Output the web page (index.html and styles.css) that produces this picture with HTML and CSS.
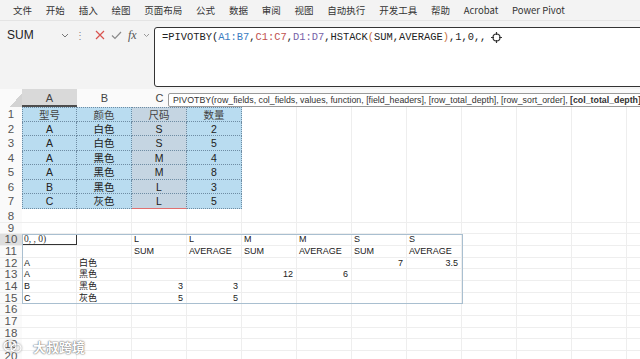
FILE: index.html
```html
<!DOCTYPE html>
<html lang="zh-CN">
<head>
  <meta charset="UTF-8">
  <title>PIVOTBY</title>
  <link rel="stylesheet" href="styles.css">
</head>
<body>
  <div class="menubar">
    <span>文件</span><span>开始</span><span>插入</span><span>绘图</span><span>页面布局</span><span>公式</span><span>数据</span><span>审阅</span><span>视图</span><span>自动执行</span><span>开发工具</span><span>帮助</span><span>Acrobat</span><span>Power Pivot</span>
  </div>

  <div class="formula-row">
    <div class="namebox">
      <span>SUM</span>
      <svg width="8" height="5" viewBox="0 0 8 5"><path d="M1 1l3 3 3-3" fill="none" stroke="#777" stroke-width="1"/></svg>
    </div>
    <div class="tools">
      <span class="dots">⋮</span>
      <svg width="10" height="10" viewBox="0 0 10 10"><path d="M1 1l8 8M9 1l-8 8" stroke="#d9534f" stroke-width="1.2"/></svg>
      <svg width="11" height="9" viewBox="0 0 11 9"><path d="M1 4.5l3 3 6-6.5" fill="none" stroke="#8a8a8a" stroke-width="1.2"/></svg>
      <span class="fx">fx</span>
      <svg width="7" height="5" viewBox="0 0 7 5"><path d="M1 1l2.5 2.5L6 1" fill="none" stroke="#999" stroke-width="1"/></svg>
    </div>
    <div class="formula-box">
      <span class="formula">=PIVOTBY(<span class="ref-a">A1:B7</span>,<span class="ref-c">C1:C7</span>,<span class="ref-d">D1:D7</span>,HSTACK<span class="paren">(</span>SUM,AVERAGE<span class="paren">)</span>,1,0,,</span>
      <svg class="cursor" width="11" height="11" viewBox="0 0 11 11"><circle cx="5.5" cy="5.5" r="3.5" fill="#fff" stroke="#333" stroke-width="1.2"/><path d="M5.5 0v3M5.5 8v3M0 5.5h3M8 5.5h3" stroke="#333" stroke-width="1.2"/></svg>
    </div>
  </div>

  <div class="sheet">
    <div class="tip">PIVOTBY(row_fields, col_fields, values, function, [field_headers], [row_total_depth], [row_sort_order], <b>[col_total_depth]</b></div>

    <div class="row head">
      <div class="rh corner"></div>
      <div class="c active">A</div><div class="c">B</div><div class="c">C</div>
    </div>

    <div class="row tall">
      <div class="rh">1</div>
      <div class="c t top first">型号</div><div class="c t top">颜色</div><div class="c t top mid">尺码</div><div class="c t top">数量</div>
    </div>
    <div class="row tall">
      <div class="rh">2</div>
      <div class="c t first">A</div><div class="c t">白色</div><div class="c t mid">S</div><div class="c t">2</div>
    </div>
    <div class="row tall">
      <div class="rh">3</div>
      <div class="c t first">A</div><div class="c t">白色</div><div class="c t mid">S</div><div class="c t">5</div>
    </div>
    <div class="row tall">
      <div class="rh">4</div>
      <div class="c t first">A</div><div class="c t">黑色</div><div class="c t mid">M</div><div class="c t">4</div>
    </div>
    <div class="row tall">
      <div class="rh">5</div>
      <div class="c t first">A</div><div class="c t">黑色</div><div class="c t mid">M</div><div class="c t">8</div>
    </div>
    <div class="row tall">
      <div class="rh">6</div>
      <div class="c t first">B</div><div class="c t">黑色</div><div class="c t mid">L</div><div class="c t">3</div>
    </div>
    <div class="row tall">
      <div class="rh">7</div>
      <div class="c t first">C</div><div class="c t">灰色</div><div class="c t mid last">L</div><div class="c t">5</div>
    </div>
    <div class="row r8"><div class="rh">8</div></div>
    <div class="row"><div class="rh">9</div></div>

    <div class="spill">
      <div class="row">
        <div class="rh on">10</div>
        <div class="c sel">0, , 0)</div><div class="c"></div><div class="c">L</div><div class="c">L</div><div class="c">M</div><div class="c">M</div><div class="c">S</div><div class="c">S</div>
      </div>
      <div class="row">
        <div class="rh">11</div>
        <div class="c"></div><div class="c"></div><div class="c">SUM</div><div class="c">AVERAGE</div><div class="c">SUM</div><div class="c">AVERAGE</div><div class="c">SUM</div><div class="c">AVERAGE</div>
      </div>
      <div class="row">
        <div class="rh">12</div>
        <div class="c">A</div><div class="c">白色</div><div class="c"></div><div class="c"></div><div class="c"></div><div class="c"></div><div class="c num">7</div><div class="c num">3.5</div>
      </div>
      <div class="row">
        <div class="rh">13</div>
        <div class="c">A</div><div class="c">黑色</div><div class="c"></div><div class="c"></div><div class="c num">12</div><div class="c num">6</div>
      </div>
      <div class="row">
        <div class="rh">14</div>
        <div class="c">B</div><div class="c">黑色</div><div class="c num">3</div><div class="c num">3</div>
      </div>
      <div class="row">
        <div class="rh">15</div>
        <div class="c">C</div><div class="c">灰色</div><div class="c num">5</div><div class="c num">5</div>
      </div>
    </div>

    <div class="row"><div class="rh">16</div></div>
    <div class="row"><div class="rh">17</div></div>
    <div class="row"><div class="rh">18</div></div>
    <div class="row"><div class="rh">19</div></div>
    <div class="row"><div class="rh">20</div></div>
  </div>

  <div class="watermark">
    <svg width="20" height="14" viewBox="0 0 20 14"><ellipse cx="7" cy="6" rx="6" ry="5" fill="none" stroke="#fff" stroke-width="1.2"/><ellipse cx="13" cy="8" rx="5" ry="4" fill="none" stroke="#fff" stroke-width="1.2"/></svg>
    <span>大叔跨境</span>
  </div>
</body>
</html>
```

FILE: styles.css
```css
body {
  margin: 0;
  width: 640px;
  height: 359px;
  overflow: hidden;
  background: #f3f3f3;
  font-family: "Liberation Sans", "Noto Sans CJK SC", sans-serif;
  color: #222;
  position: relative;
}

.menubar {
  display: flex;
  align-items: center;
  gap: 13.8px;
  height: 20px;
  padding-left: 13px;
  font-size: 9.5px;
  color: #333;
  font-family: "Noto Sans CJK SC", "Liberation Sans", sans-serif;
  border-bottom: 1px solid #e4e4e4;
}

.formula-row {
  display: flex;
  align-items: flex-start;
  height: 67px;
  padding-top: 6px;
  box-sizing: border-box;
}

.namebox {
  flex: none;
  display: flex;
  align-items: center;
  justify-content: space-between;
  width: 73px;
  height: 16px;
  padding: 0 4px 0 7px;
  box-sizing: border-box;
  font-size: 12px;
  color: #222;
}

.tools {
  flex: none;
  display: flex;
  align-items: center;
  gap: 6px;
  width: 81px;
  height: 16px;
  padding-left: 2px;
  box-sizing: border-box;
}

.tools .dots {
  font-size: 10px;
  color: #888;
  margin-right: 4px;
}

.tools .fx {
  font-family: "Liberation Serif", serif;
  font-style: italic;
  font-size: 12px;
  color: #555;
}

.formula-box {
  flex: none;
  display: flex;
  align-items: flex-start;
  width: 500px;
  height: 60px;
  padding: 3px 7px;
  box-sizing: border-box;
  background: #fff;
  border: 1.5px solid #333;
  border-radius: 3px;
  font-family: "Liberation Mono", monospace;
  font-size: 10.4px;
  color: #222;
}

.formula-box .cursor {
  margin: 1px 0 0 5px;
}

.ref-a { color: #3a7bbf; }
.ref-c { color: #c0504d; }
.ref-d { color: #7561a8; }
.paren { color: #c8703a; }

.sheet {
  position: relative;
  height: 271px;
  margin-top: 1px;
  background-color: #fff;
  background-image: repeating-linear-gradient(to right, transparent 0 54px, #eeeeee 54px 55px);
  background-position: 22px 0;
}

.tip {
  position: absolute;
  left: 168px;
  top: 4px;
  height: 12px;
  width: 480px;
  padding-left: 4px;
  background: #fff;
  border: 1px solid #9a9a9a;
  border-radius: 2px;
  font-size: 8.8px;
  line-height: 12px;
  color: #333;
  white-space: nowrap;
  overflow: hidden;
}

.row {
  display: flex;
  height: 11.7px;
  line-height: 11.7px;
  border-bottom: 1px solid #eeeeee;
  box-sizing: border-box;
  font-size: 9px;
}

.row.head {
  height: 18px;
  line-height: 18px;
  font-size: 11px;
  color: #444;
  background: #fafafa;
  border-bottom: none;
}

.row.tall {
  height: 14.5px;
  line-height: 14px;
  border-bottom: none;
}

.row.r8 {
  height: 14px;
  line-height: 14px;
}

.rh {
  flex: none;
  width: 22px;
  text-align: center;
  font-size: 11.5px;
  color: #555;
  background: #fafafa;
}

.rh.on {
  background: #dedede;
}

.corner {
  background: #fafafa linear-gradient(to top left, #d3d3d3 50%, transparent 50%) no-repeat right bottom / 12px 14px;
}

.c {
  flex: none;
  width: 55px;
  padding: 0 2px;
  box-sizing: border-box;
  white-space: nowrap;
  overflow: hidden;
}

.head .c {
  text-align: center;
}

.head .active {
  background: #d9d9d9;
  border-bottom: 2px solid #4d4d4d;
}

.c.t {
  text-align: center;
  font-size: 10.5px;
  color: #222;
  background: #b9dcf0;
  border-right: 1px dotted #6e8ca3;
  border-bottom: 1px dotted #6e8ca3;
}

.c.t.top {
  color: #444;
  border-top: 1px dotted #6e8ca3;
}

.c.t.first {
  border-left: 1px dotted #6e8ca3;
}

.c.t.mid {
  background: #c5d5e2;
}

.c.t.last {
  border-bottom: 1px solid #e07070;
}

.c.num {
  text-align: right;
  padding-right: 4px;
}

.c.sel {
  font-family: "Liberation Serif", serif;
  font-size: 9.5px;
  color: #333;
  outline: 1.5px solid #333;
  outline-offset: -1px;
}

.spill {
  position: relative;
}

.spill::after {
  content: "";
  position: absolute;
  left: 22px;
  top: 0;
  width: 441px;
  height: 100%;
  border: 1px solid #a9bfd0;
  box-sizing: border-box;
  pointer-events: none;
}

.watermark {
  position: absolute;
  left: 3px;
  bottom: 3px;
  display: flex;
  align-items: center;
  gap: 10px;
  font-family: "Noto Sans CJK SC", sans-serif;
  font-size: 13px;
  font-weight: bold;
  color: #fff;
  text-shadow: 0 0 2px #777, 0 0 1px #555;
}

.watermark svg {
  filter: drop-shadow(0 0 1px #777);
}
```
